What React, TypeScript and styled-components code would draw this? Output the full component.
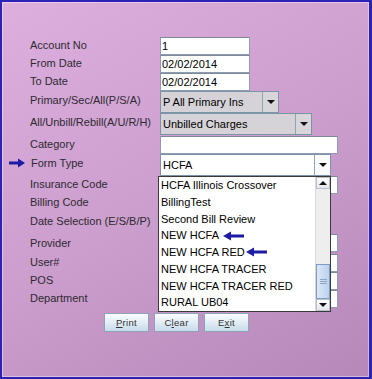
import React from 'react';
import styled, { createGlobalStyle } from 'styled-components';

const GlobalStyle = createGlobalStyle`
  html, body {
    margin: 0;
    padding: 0;
  }
  body {
    font-family: "Liberation Sans", Arial, sans-serif;
  }
`;

const Window = styled.div`
  box-sizing: border-box;
  width: 372px;
  height: 379px;
  border: 2px solid #2b22b6;
  border-right-width: 3px;
  background: linear-gradient(150deg, #dcafdf 0%, #cb9ecd 50%, #b687b9 100%);
  box-shadow: inset 0 0 0 1px rgba(255, 240, 255, 0.45);
  padding: 35px 0 0 28px;
`;

const Form = styled.div`
  display: grid;
  grid-template-columns: 130px 190px;
`;

const Label = styled.div<{ $lift?: number }>`
  display: flex;
  align-items: center;
  align-self: center;
  margin-bottom: ${p => p.$lift ?? 2}px;
  font-size: 11px;
  color: #2e2a30;
  white-space: nowrap;
`;

const Cell = styled.div<{ $h: number }>`
  position: relative;
  height: ${p => p.$h}px;
  display: flex;
  align-items: flex-start;
`;

const TextField = styled.div<{ $w: number }>`
  box-sizing: border-box;
  width: ${p => p.$w}px;
  height: 18px;
  background: #fff;
  border: 1px solid #8e9db0;
  border-top-color: #7c8a9c;
  font-size: 11px;
  line-height: 16px;
  padding-left: 1px;
  color: #000;
`;

const Combo = styled.div<{ $w: number; $white?: boolean }>`
  box-sizing: border-box;
  width: ${p => p.$w}px;
  height: 22px;
  display: flex;
  background: ${p => (p.$white ? '#fff' : '#d5d3d7')};
  border: 1px solid #7d93a8;
  font-size: 11px;
  color: #000;
`;

const ComboText = styled.div`
  flex: 1;
  line-height: 20px;
  padding-left: 2px;
  white-space: nowrap;
  overflow: hidden;
`;

const ComboButton = styled.div<{ $white?: boolean }>`
  width: 15px;
  border-left: 1px solid #8fa3b6;
  background: ${p => (p.$white ? '#fafafa' : '#d8d6da')};
  display: flex;
  align-items: center;
  justify-content: center;
`;

const Triangle = styled.span<{ $up?: boolean }>`
  width: 0;
  height: 0;
  border-left: 4px solid transparent;
  border-right: 4px solid transparent;
  ${p => (p.$up ? 'border-bottom: 4px solid #111;' : 'border-top: 4px solid #111;')}
`;

const Popup = styled.div`
  position: absolute;
  top: 22px;
  left: -2px;
  width: 173px;
  height: 136px;
  box-sizing: border-box;
  border: 1px solid #3a3a3a;
  background: #fff;
  display: flex;
  z-index: 2;
`;

const Items = styled.div`
  flex: 1;
  display: flex;
  flex-direction: column;
`;

const Item = styled.div`
  height: 16.75px;
  line-height: 16.75px;
  padding-left: 2px;
  font-size: 11px;
  color: #000;
  display: flex;
  align-items: center;
  white-space: nowrap;
`;

const ScrollBar = styled.div`
  width: 14px;
  display: flex;
  flex-direction: column;
  background: #eeeeee;
  border-left: 1px solid #d8d8d8;
`;

const ScrollButton = styled.div`
  height: 12px;
  box-sizing: border-box;
  border: 1px solid #b8c0c8;
  background: linear-gradient(#ffffff, #e4e8ec);
  display: flex;
  align-items: center;
  justify-content: center;
`;

const Track = styled.div`
  flex: 1;
  display: flex;
  flex-direction: column;
  justify-content: flex-end;
`;

const Thumb = styled.div`
  height: 35px;
  box-sizing: border-box;
  border: 1px solid #7f9cc6;
  background: linear-gradient(90deg, #dce8f6, #bcd2ee);
  display: flex;
  flex-direction: column;
  align-items: center;
  justify-content: center;
  gap: 1px;
`;

const Grip = styled.span`
  width: 7px;
  height: 1px;
  background: #8aa6cc;
`;

const Buttons = styled.div`
  display: flex;
  gap: 5px;
  margin: 5px 0 0 74px;
`;

const Button = styled.div`
  box-sizing: border-box;
  width: 45px;
  height: 19px;
  border: 1px solid #8ea3b8;
  background: linear-gradient(#fbfdfe 0%, #e4eef6 45%, #c6dbea 100%);
  font-size: 9.5px;
  color: #333;
  letter-spacing: 0.3px;
  display: flex;
  align-items: center;
  justify-content: center;
`;

const ArrowSvg = styled.svg<{ $gap: number }>`
  flex: none;
  margin-left: ${p => p.$gap}px;
`;

const LeadArrow = styled.svg`
  flex: none;
  margin-left: -21px;
  margin-right: 6px;
`;

const BlueArrow = ({ gap }: { gap: number }) => (
  <ArrowSvg $gap={gap} width="21" height="10" viewBox="0 0 21 10">
    <path d="M0 5 L8 0.5 L8 3.5 L21 3.5 L21 6.5 L8 6.5 L8 9.5 Z" fill="#1d1aa3" />
  </ArrowSvg>
);

const items = [
  'HCFA Illinois Crossover',
  'BillingTest',
  'Second Bill Review',
  'NEW HCFA',
  'NEW HCFA RED',
  'NEW HCFA TRACER',
  'NEW HCFA TRACER RED',
  'RURAL UB04',
];

const App: React.FC = () => {
  return (
    <>
      <GlobalStyle />
      <Window>
        <Form>
          <Label>Account No</Label>
          <Cell $h={18}><TextField $w={90}>1</TextField></Cell>

          <Label>From Date</Label>
          <Cell $h={18}><TextField $w={90}>02/02/2014</TextField></Cell>

          <Label>To Date</Label>
          <Cell $h={18}><TextField $w={90}>02/02/2014</TextField></Cell>

          <Label $lift={4}>Primary/Sec/All(P/S/A)</Label>
          <Cell $h={22}>
            <Combo $w={119}>
              <ComboText>P All Primary Ins</ComboText>
              <ComboButton><Triangle /></ComboButton>
            </Combo>
          </Cell>

          <Label $lift={5}>All/Unbill/Rebill(A/U/R/H)</Label>
          <Cell $h={23}>
            <Combo $w={152}>
              <ComboText>Unbilled Charges</ComboText>
              <ComboButton><Triangle /></ComboButton>
            </Combo>
          </Cell>

          <Label $lift={3}>Category</Label>
          <Cell $h={18}><TextField $w={178} /></Cell>

          <Label $lift={4}>
            <LeadArrow width="16" height="10" viewBox="0 0 16 10">
              <path d="M16 5 L9 0.5 L9 3.5 L0 3.5 L0 6.5 L9 6.5 L9 9.5 Z" fill="#1d1aa3" />
            </LeadArrow>
            Form Type
          </Label>
          <Cell $h={22}>
            <Combo $w={171} $white>
              <ComboText>HCFA</ComboText>
              <ComboButton $white><Triangle /></ComboButton>
            </Combo>
            <Popup>
              <Items>
                {items.map(item => (
                  <Item key={item}>
                    {item}
                    {item === 'NEW HCFA' && <BlueArrow gap={4} />}
                    {item === 'NEW HCFA RED' && <BlueArrow gap={1} />}
                  </Item>
                ))}
              </Items>
              <ScrollBar>
                <ScrollButton><Triangle $up /></ScrollButton>
                <Track>
                  <Thumb><Grip /><Grip /><Grip /></Thumb>
                </Track>
                <ScrollButton><Triangle /></ScrollButton>
              </ScrollBar>
            </Popup>
          </Cell>

          <Label>Insurance Code</Label>
          <Cell $h={18}><TextField $w={178} /></Cell>

          <Label>Billing Code</Label>
          <Cell $h={18}><TextField $w={150} /></Cell>

          <Label $lift={4}>Date Selection (E/S/B/P)</Label>
          <Cell $h={22}><Combo $w={150} /></Cell>

          <Label>Provider</Label>
          <Cell $h={20}><TextField $w={178} /></Cell>

          <Label>User#</Label>
          <Cell $h={18}><TextField $w={178} /></Cell>

          <Label>POS</Label>
          <Cell $h={18}><TextField $w={178} /></Cell>

          <Label>Department</Label>
          <Cell $h={18}><TextField $w={178} /></Cell>
        </Form>
        <Buttons>
          <Button><u>P</u>rint</Button>
          <Button>C<u>l</u>ear</Button>
          <Button>E<u>x</u>it</Button>
        </Buttons>
      </Window>
    </>
  );
};

export default App;
